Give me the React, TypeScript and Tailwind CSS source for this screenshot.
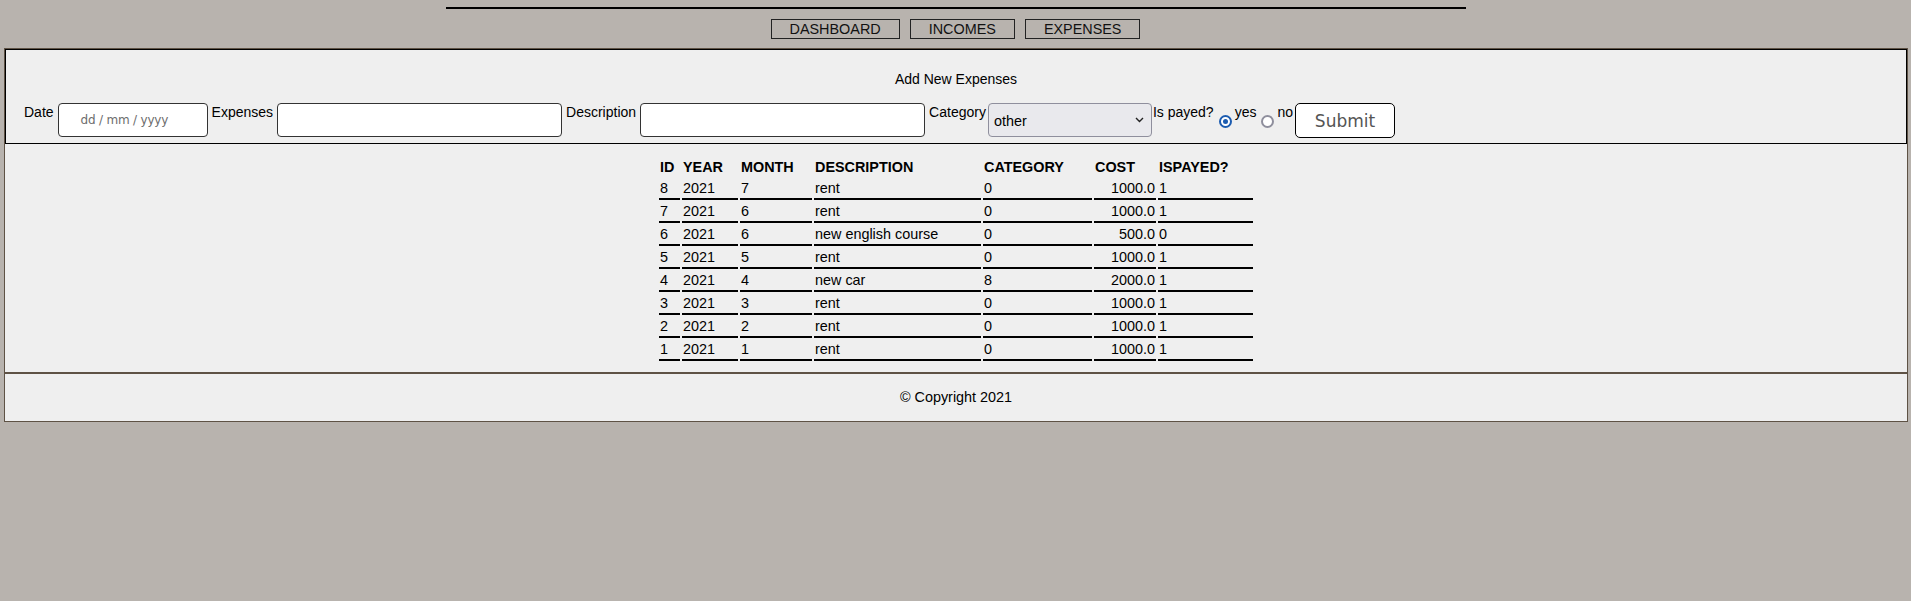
import React from "react";

const rows: (string | number)[][] = [
  [8, 2021, 7, "rent", 0, "1000.0", 1],
  [7, 2021, 6, "rent", 0, "1000.0", 1],
  [6, 2021, 6, "new english course", 0, "500.0", 0],
  [5, 2021, 5, "rent", 0, "1000.0", 1],
  [4, 2021, 4, "new car", 8, "2000.0", 1],
  [3, 2021, 3, "rent", 0, "1000.0", 1],
  [2, 2021, 2, "rent", 0, "1000.0", 1],
  [1, 2021, 1, "rent", 0, "1000.0", 1],
];

export default function App() {
  return (
    <div className="min-h-[601px] bg-[#b8b3ae] font-['Liberation_Sans',Arial,sans-serif] text-[14.4px] leading-[17px] text-black pt-[7px]">
      <div className="mx-auto w-[1020px] h-[2px] bg-black" />
      <nav className="flex justify-center gap-[10px] mt-[10px]">
        {["DASHBOARD", "INCOMES", "EXPENSES"].map((t) => (
          <button
            key={t}
            className="h-[20px] px-[18px] border border-[#222] leading-[17px] text-[#111]"
          >
            {t}
          </button>
        ))}
      </nav>

      <div className="mt-[9px] ml-[4px] w-[1904px] border border-[#5e5245] bg-[#efefef]">
        <form className="border border-black pt-[21px] pb-[5px] text-[14px]">
          <div className="text-center">Add New Expenses</div>
          <div className="mt-[15px] flex items-start pl-[18px]">
            <span className="mt-[1px]">Date</span>
            <div className="ml-[4px] w-[150px] h-[34px] border border-[#333] rounded-[4px] bg-white flex items-center pl-[22px] pt-[1px] font-['DejaVu_Sans',sans-serif] text-[12px] text-[#6d6d6d] tracking-[-0.2px]">
              dd / mm / yyyy
            </div>
            <span className="ml-[4px] mt-[1px]">Expenses</span>
            <div className="ml-[4px] w-[285px] h-[34px] border border-[#333] rounded-[4px] bg-white" />
            <span className="ml-[4px] mt-[1px]">Description</span>
            <div className="ml-[4px] w-[285px] h-[34px] border border-[#333] rounded-[4px] bg-white" />
            <span className="ml-[4px] mt-[1px]">Category</span>
            <div className="ml-[2px] w-[164px] h-[34px] border border-[#8f8f9d] rounded-[4px] bg-[#e9e9ed] flex items-center justify-between pl-[5px] pr-[7px] pt-[3px] text-[14.4px]">
              <span>other</span>
              <svg width="9" height="6" viewBox="0 0 9 6" className="mb-[3px]">
                <path d="M1 1 L4.5 4.5 L8 1" fill="none" stroke="#222" strokeWidth="1.4" />
              </svg>
            </div>
            <span className="ml-[1px] mt-[1px]">Is payed?</span>
            <span className="self-center ml-[5px] mr-[3px] mt-[1px] w-[13px] h-[13px] rounded-full border-[2px] border-[#1c5cb0] bg-white flex items-center justify-center">
              <span className="w-[5px] h-[5px] rounded-full bg-[#1c5cb0]" />
            </span>
            <span className="mt-[1px]">yes</span>
            <span className="self-center ml-[5px] mr-[3px] mt-[1px] w-[13px] h-[13px] rounded-full border-[2px] border-[#8f8f9d] bg-white" />
            <span className="mt-[1px]">no</span>
            <button
              type="button"
              className="ml-[2px] w-[100px] h-[35px] rounded-[5px] border border-black bg-white text-[#555] font-['DejaVu_Sans',sans-serif] text-[17px] leading-[20px]"
            >
              Submit
            </button>
          </div>
        </form>

        <div className="flex justify-center pt-[12px] pb-[9px]">
          <table className="table-fixed w-[598px] border-separate border-spacing-[2px] leading-[17px]">
            <thead>
              <tr>
                {[
                  ["ID", "w-[21px]"],
                  ["YEAR", "w-[56px]"],
                  ["MONTH", "w-[72px]"],
                  ["DESCRIPTION", "w-[167px]"],
                  ["CATEGORY", "w-[109px]"],
                  ["COST", "w-[62px]"],
                  ["ISPAYED?", "w-[95px]"],
                ].map(([h, w]) => (
                  <th key={h} className={`${w} p-[1px] text-left font-bold`}>
                    {h}
                  </th>
                ))}
              </tr>
            </thead>
            <tbody>
              {rows.map((r) => (
                <tr key={r[0]}>
                  {r.map((c, i) => (
                    <td
                      key={i}
                      className={`p-[1px] border-b-2 border-black whitespace-nowrap ${
                        i === 5 ? "text-right" : "text-left"
                      }`}
                    >
                      {c}
                    </td>
                  ))}
                </tr>
              ))}
            </tbody>
          </table>
        </div>

        <footer className="border-t-2 border-[#5e5245] h-[49px] flex items-center justify-center">
          © Copyright 2021
        </footer>
      </div>
    </div>
  );
}
